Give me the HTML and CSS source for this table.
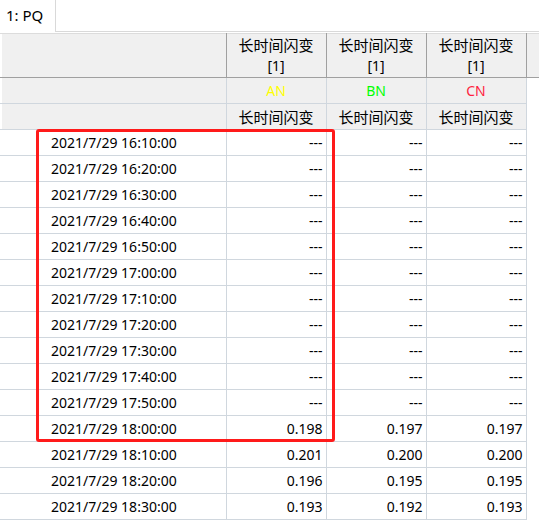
FILE: index.html
```html
<!DOCTYPE html>
<html>
<head>
<meta charset="utf-8">
<link rel="stylesheet" href="styles.css">
</head>
<body>
<div class="tabbar">
  <div class="tab">1: PQ</div>
  <div class="tabrest"></div>
</div>
<div class="wrap">
<table class="grid">
  <colgroup>
    <col class="c0"><col class="c1"><col class="c1"><col class="c1"><col class="cf">
  </colgroup>
  <tr class="h1">
    <th class="first"></th><th><span class="cjk">长时间闪变</span><br>[1]</th><th><span class="cjk">长时间闪变</span><br>[1]</th><th><span class="cjk">长时间闪变</span><br>[1]</th><th class="fill"></th>
  </tr>
  <tr class="h2">
    <th class="first"></th><th class="an">AN</th><th class="bn">BN</th><th class="cn">CN</th><td class="none"></td>
  </tr>
  <tr class="h2">
    <th class="first"></th><th class="cjk">长时间闪变</th><th class="cjk">长时间闪变</th><th class="cjk">长时间闪变</th><td class="none"></td>
  </tr>
  <tr><td class="t">2021/7/29 16:10:00</td><td>---</td><td>---</td><td>---</td><td class="none"></td></tr>
  <tr><td class="t">2021/7/29 16:20:00</td><td>---</td><td>---</td><td>---</td><td class="none"></td></tr>
  <tr><td class="t">2021/7/29 16:30:00</td><td>---</td><td>---</td><td>---</td><td class="none"></td></tr>
  <tr><td class="t">2021/7/29 16:40:00</td><td>---</td><td>---</td><td>---</td><td class="none"></td></tr>
  <tr><td class="t">2021/7/29 16:50:00</td><td>---</td><td>---</td><td>---</td><td class="none"></td></tr>
  <tr><td class="t">2021/7/29 17:00:00</td><td>---</td><td>---</td><td>---</td><td class="none"></td></tr>
  <tr><td class="t">2021/7/29 17:10:00</td><td>---</td><td>---</td><td>---</td><td class="none"></td></tr>
  <tr><td class="t">2021/7/29 17:20:00</td><td>---</td><td>---</td><td>---</td><td class="none"></td></tr>
  <tr><td class="t">2021/7/29 17:30:00</td><td>---</td><td>---</td><td>---</td><td class="none"></td></tr>
  <tr><td class="t">2021/7/29 17:40:00</td><td>---</td><td>---</td><td>---</td><td class="none"></td></tr>
  <tr><td class="t">2021/7/29 17:50:00</td><td>---</td><td>---</td><td>---</td><td class="none"></td></tr>
  <tr><td class="t">2021/7/29 18:00:00</td><td>0.198</td><td>0.197</td><td>0.197</td><td class="none"></td></tr>
  <tr><td class="t">2021/7/29 18:10:00</td><td>0.201</td><td>0.200</td><td>0.200</td><td class="none"></td></tr>
  <tr><td class="t">2021/7/29 18:20:00</td><td>0.196</td><td>0.195</td><td>0.195</td><td class="none"></td></tr>
  <tr><td class="t">2021/7/29 18:30:00</td><td>0.193</td><td>0.192</td><td>0.193</td><td class="none"></td></tr>
</table>
<div class="highlight"></div>
</div>
</body>
</html>
```
FILE: styles.css
```css
html, body {
  margin: 0;
  padding: 0;
  background: #ffffff;
  font-family: "Noto Sans", "Noto Sans CJK SC", sans-serif;
  font-size: 14px;
  color: #000;
  overflow: hidden;
}
.tabbar {
  display: flex;
  height: 32px;
}
.tab {
  width: 49px;
  padding-left: 6px;
  line-height: 31px;
  font-size: 15px;
  border-right: 1px solid #d9d9d9;
  color: #000;
}
.tabrest {
  flex: 1;
  height: 31px;
  border-bottom: 1px solid #d9d9d9;
}
.wrap {
  position: relative;
  padding-top: 1px;
}
.grid {
  border-collapse: collapse;
  table-layout: fixed;
  width: 539px;
}
.c0 { width: 226px; }
.c1 { width: 100px; }
.cf { width: 13px; }
.cjk {
  font-family: "Noto Sans CJK SC", sans-serif;
  font-size: 15px;
}
.grid th {
  background: #f0f0f0;
  font-weight: normal;
  text-align: center;
  padding: 0;
}
.grid th.first {
  box-shadow: inset 2px 0 0 #ffffff;
}
.h1 th {
  height: 43px;
  line-height: 20px;
  border-top: 1px solid #dcdcdc;
  border-right: 1px solid #a0a0a0;
  border-bottom: 1px solid #a0a0a0;
  vertical-align: middle;
}
.h1 th.fill { border-right: none; }
.h2 th {
  height: 25px;
  line-height: 25px;
  border-right: 1px solid #d0d7de;
  border-bottom: 1px solid #d0d7de;
}
.grid td {
  height: 25px;
  line-height: 25px;
  padding: 0 3px 0 0;
  text-align: right;
  border-right: 1px solid #d0d7de;
  border-bottom: 1px solid #d0d7de;
  white-space: nowrap;
}
.grid td.t {
  text-align: left;
  padding-left: 51px;
}
.grid td.none {
  border: none;
  background: #fff;
}
.an { color: #ffff00; }
.bn { color: #00ff00; }
.cn { color: #ff1e40; }
.highlight {
  position: absolute;
  left: 36px;
  top: 97px;
  width: 293px;
  height: 307px;
  border: 3px solid #ff1a1a;
  border-radius: 3px;
}
```
